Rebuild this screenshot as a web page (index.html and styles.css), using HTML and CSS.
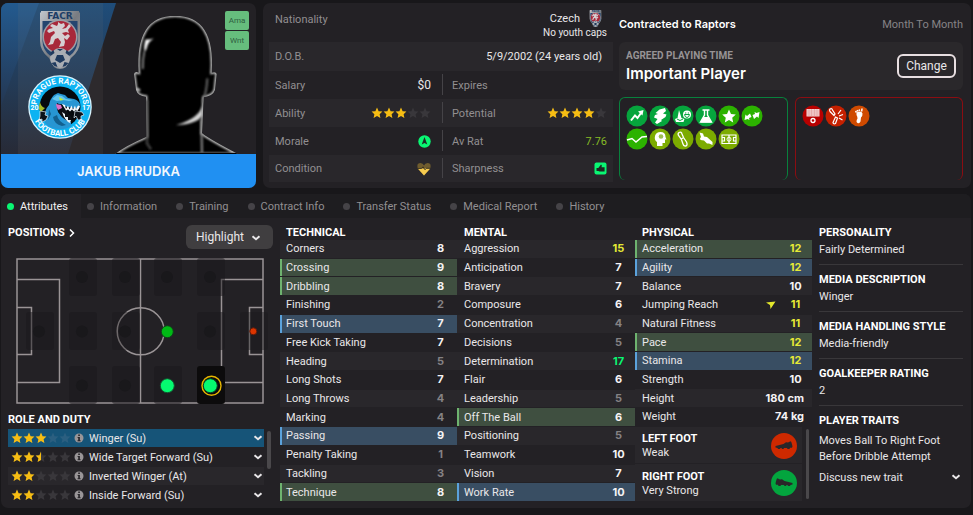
FILE: index.html
```html
<!DOCTYPE html>
<html lang="en">
<head>
<meta charset="utf-8">
<title>Jakub Hrudka</title>
<link rel="stylesheet" href="styles.css">
</head>
<body>
<svg class="defs" aria-hidden="true">
  <defs>
    <path id="star" d="M6 .6 7.6 4.2 11.4 4.6 8.6 7.2 9.4 11 6 9.1 2.6 11 3.4 7.2 .6 4.6 4.4 4.2Z"/>
    <clipPath id="half"><path d="M0 0h6v12H0z"/></clipPath>
    <g id="empty5"><use href="#star"/><use href="#star" x="12"/><use href="#star" x="24"/><use href="#star" x="36"/><use href="#star" x="48"/></g>
    <symbol id="stars2" viewBox="0 0 60 12"><use href="#empty5" class="off"/><use href="#star" class="on"/><use href="#star" x="12" class="on"/></symbol>
    <symbol id="stars25" viewBox="0 0 60 12"><use href="#empty5" class="off"/><use href="#star" class="on"/><use href="#star" x="12" class="on"/><g transform="translate(24)" class="on"><use href="#star" clip-path="url(#half)"/></g></symbol>
    <symbol id="stars3" viewBox="0 0 60 12"><use href="#empty5" class="off"/><use href="#star" class="on"/><use href="#star" x="12" class="on"/><use href="#star" x="24" class="on"/></symbol>
    <symbol id="stars4" viewBox="0 0 60 12"><use href="#empty5" class="off"/><use href="#star" class="on"/><use href="#star" x="12" class="on"/><use href="#star" x="24" class="on"/><use href="#star" x="36" class="on"/></symbol>
    <symbol id="chev" viewBox="0 0 10 10"><path d="M1.5 3.2 5 6.2 8.500 3.200" fill="none" stroke="currentColor" stroke-width="2"/></symbol>
    <symbol id="info" viewBox="0 0 10 10"><circle cx="5" cy="5" r="4.500" fill="#9a9698"/><path d="M4.200 1.600h1.700v1.500H4.200zM3.600 4h2.300v3.200h.7v1H3.500v-1h.7V5h-.6z" fill="#28262a"/></symbol>
    <linearGradient id="steel" x1="0" x2="1" y2="1"><stop offset="0" stop-color="#c3c7cd"/><stop offset=".5" stop-color="#777b81"/><stop offset="1" stop-color="#a4a8ad"/></linearGradient>
    <symbol id="crest" viewBox="0 0 40 58">
      <path d="M1 0h38v1l1 1v28q0 10-9 17l-5 9q-6 4-12 0l-5-9Q0 40 0 30V2l1-1Z" fill="url(#steel)"/>
      <path d="M2.500 10h35v20q0 9-8 15h-19q-8-6-8-15Z" fill="#24456f"/>
      <circle cx="20" cy="26" r="17.500" fill="#9c9fa6"/>
      <circle cx="20" cy="26" r="16" fill="#a8283a"/>
      <path d="M18 11l3 2 3-1 1 3-3 3 4-1 3-4 2 2-3 4 1 3-3-1-4 1 3 3 3-2 2 2-3 4-3-2 1 4-1 4-5 1 2-5-3-4-3 1-2 5-5 1 2-3 1-5 4-4-1-2-5 2-2-2 2-2 4-1-3-2 2-2 5 2 1-2Z" fill="#d5cfd2"/>
      <circle cx="20" cy="47" r="10" fill="#a9adb3"/>
      <path d="M17 44h6l2 5-5 3-5-3ZM10.500 45l4-3-1-3q-4 2-3 6ZM29.500 45l-4-3 1-3q4 2 3 6ZM11.500 52l4-1 2 5q-4-1-6-4ZM28.500 52l-4-1-2 5q4-1 6-4ZM17 38h6l-3 2Z" fill="#1f3a5e"/>
      <text x="20" y="8" text-anchor="middle" class="crest-name">FACR</text>
    </symbol>
  </defs>
</svg>

<section class="top">
  <div class="card player">
    <div class="art">
      <svg class="backdrop" viewBox="0 0 255 151" preserveAspectRatio="none" aria-hidden="true">
        <defs><linearGradient id="sky" x2="0" y2="1"><stop offset="0" stop-color="#1f4d7a"/><stop offset=".5" stop-color="#233c59"/><stop offset="1" stop-color="#272a36"/></linearGradient>
        <linearGradient id="sky2" x2="0" y2="1"><stop offset="0" stop-color="#235a8f"/><stop offset="1" stop-color="#243752"/></linearGradient></defs>
        <path d="M0 0H115L67 151H0Z" fill="url(#sky)"/>
        <path d="M0 0H38L0 103Z" fill="url(#sky2)"/>
        <path d="M17 0h85v151H17z" fill="#8a8078" opacity=".1"/>
      </svg>
      <div class="crests">
        <svg width="40" height="58" role="img" aria-label="Czech Republic"><use href="#crest"/></svg>
        <svg width="64" height="64" viewBox="0 0 64 64" role="img" aria-label="Prague Raptors">
          <defs><path id="arcTop" d="M8.500 32a23.500 23.500 0 0 1 47 0"/><path id="arcBot" d="M3 32a29 29 0 0 0 58 0"/></defs>
          <circle cx="32" cy="32" r="31.800" fill="#d9f3fd"/><circle cx="32" cy="32" r="30.500" fill="#0cb3f2"/>
          <circle cx="32" cy="32" r="20.500" fill="#05090d"/>
          <path d="M12 27q-1 3-1 7l2 3 4-4q-4-1-5-6Z" fill="#a3bb22"/>
          <path d="M17 44q-1-9 4-14 1-6 5-10l4-2 3 1 4 1 3 3 6 1q4 1 6 5l-1 5-5-1-7-1-6-3-4 2 1 6 5 5 5 4 3 1v4q-6 4-14 3-8-1-12-6Z" fill="#2796d3"/>
          <path d="M24 24l5-4 5 1 4 3 7 1-4 1-6-1-6 1Z" fill="#63c6ef"/>
          <path d="M29 40q1 6 9 10l-4 1q-8-2-9-9ZM21 34l2 5-3 6Z" fill="#12608f"/>
          <path d="M29 28l6 3 4 5 5 7-2 4q-8-3-11-9-3-5-2-10Z" fill="#0c0f14"/>
          <path d="M28 29l5 1 1 3-4 2q-2-3-2-6Z" fill="#dd70c8"/>
          <path d="M34 29l3 1 1 4 2-3.500 1.500 4 2-4 1.500 4 2-4 1 3.500 2-3.500 2 .5-1 2.500-2 3-1-2-2 2-2-2-2 2-2-2-2 1Z" fill="#f5fbff"/>
          <path d="M34 37l3 2 0 3 3 0 0 3 3 0-1 3q-5-2-8-11Z" fill="#e9f3f8"/>
          <path d="M31 22l5 3-4 .5Z" fill="#bdec3a"/>
          <path d="M12 36l6 1-1 3 3 1-2 4-4 2 0-3-3 1 1-4ZM47 36l7 1 2 3-3 1 0 4-3 0-2-4-2 2Z" fill="#0b1118" stroke="#dfeef6" stroke-width=".7"/>
          <text class="ring"><textPath href="#arcTop" startOffset="50%" text-anchor="middle">PRAGUE RAPTORS</textPath></text>
          <text class="ring"><textPath href="#arcBot" startOffset="50%" text-anchor="middle">FOOTBALL CLUB</textPath></text>
          <text class="ring year" x="2.500" y="34.500">20</text><text class="ring year" x="54" y="34.500">17</text>
        </svg>
      </div>
      <svg class="head" viewBox="345 42 369 420" aria-hidden="true">
        <defs><filter id="soft" x="-20%" y="-20%" width="140%" height="140%"><feGaussianBlur stdDeviation="2.500"/></filter>
        <path id="bust" d="M345 462q30-24 95-52l-2-120q-25-2-30-20l-6-48q2-9 14-4Q404 47 525 47q122 0 110 171 14-4 15 4l-5 48q-6 18-34 22l-5 108q30 22 108 62Z"/>
        <clipPath id="headClip"><use href="#bust"/></clipPath></defs>
        <use href="#bust" fill="#000"/>
        <g clip-path="url(#headClip)">
          <use href="#bust" fill="none" stroke="#d0d0d0" stroke-width="8" filter="url(#soft)"/>
          <g filter="url(#soft)">
            <path d="M437 118q12 2 24-3-14 10-18 20-3 14-9 22-4-16 3-39Z" fill="#fff"/>
            <path d="M433 155q-5 22-5 52" stroke="#999" stroke-width="5" fill="none"/>
            <path d="M606 318q-8 36-78 58 66-4 79-30Z" fill="#d4d4d4"/>
            <path d="M604 360l2 100" stroke="#8a8a8a" stroke-width="6" fill="none"/>
            <path d="M622 235q-2 40-14 72" stroke="#666" stroke-width="6" fill="none"/>
            <path d="M441 300v130l12 18" stroke="#444" stroke-width="7" fill="none"/>
            <path d="M410 266l10 6" stroke="#eee" stroke-width="6" fill="none"/>
          </g>
          <path d="M345 464H714" stroke="#000" stroke-width="12"/>
        </g>
      </svg>
      <div class="badges"><span>Ama</span><span>Wnt</span></div>
    </div>
    <h1>JAKUB HRUDKA</h1>
  </div>

  <div class="card facts">
    <dl class="details">
      <div class="row nation"><dt>Nationality</dt><dd><span class="country">Czech <svg width="13" height="17"><use href="#crest"/></svg></span><small>No youth caps</small></dd></div>
      <div class="row dob"><dt>D.O.B.</dt><dd>5/9/2002 (24 years old)</dd></div>
      <div class="pair"><div class="row"><dt>Salary</dt><dd class="big">$0</dd></div><div class="row"><dt>Expires</dt><dd></dd></div></div>
      <div class="pair"><div class="row"><dt>Ability</dt><dd><svg class="stars" role="img" aria-label="3 of 5"><use href="#stars3"/></svg></dd></div><div class="row"><dt>Potential</dt><dd><svg class="stars" role="img" aria-label="4 of 5"><use href="#stars4"/></svg></dd></div></div>
      <div class="pair"><div class="row"><dt>Morale</dt><dd><svg width="13" height="13" viewBox="0 0 13 13"><circle cx="6.500" cy="6.500" r="6.200" fill="#09f773"/><path d="M6.500 2 9.300 9.500 6.500 8 3.700 9.500Z" fill="#202a25"/></svg></dd></div><div class="row"><dt>Av Rat</dt><dd class="rating">7.76</dd></div></div>
      <div class="pair"><div class="row"><dt>Condition</dt><dd><svg width="14" height="14" viewBox="0 0 14 14"><path d="M7 13.500 1 7Q-1 1 3.500 1 6 1 7 3.500 8 1 10.500 1 15 1 13 7Z" fill="#6f5c2e"/><path d="M.8 6.500h12.400L7 13.500Z" fill="#f6cb4f"/><path d="M1 6.500h3.500L6 4.800l2 3 1.500-1.500H13" fill="none" stroke="#2a261f" stroke-width=".8"/></svg></dd></div><div class="row"><dt>Sharpness</dt><dd><svg width="13" height="13" viewBox="0 0 13 13"><rect x=".5" y=".5" width="12" height="12" rx="2" fill="#09f773"/><path d="M2.500 6h1.800L7 2.500q1.300.3.600 2.700h3v4.300H5.500L4.300 9H2.500Z" fill="#1d2922"/></svg></dd></div></div>
    </dl>

    <div class="contract">
      <div class="contract-head"><b>Contracted to Raptors</b><span>Month To Month</span></div>
      <div class="agreed">
        <div><h2>AGREED PLAYING TIME</h2><p>Important Player</p></div>
        <button type="button" class="change">Change</button>
      </div>
      <div class="reports">
        <div class="report pros">
          <svg viewBox="0 0 22 22"><circle cx="11" cy="11" r="10.500" fill="#06a53d"/><path d="M5 15.500 9 10.500l2.500 2.500L15 8" fill="none" stroke="#fff" stroke-width="2"/><path d="M12 6.500 17.500 5l-1 5.500Z" fill="#fff"/></svg>
          <svg viewBox="0 0 22 22"><circle cx="11" cy="11" r="10.500" fill="#06a53d"/><path d="M10.500 4.500 16 3l1 3-3 2.500 3.500 1-1 2.500-4.500 3 1 1L8 19l-2-1.500L8.500 14 5 12.500 6 10 9 9 6.500 8Z" fill="#fff"/></svg>
          <svg viewBox="0 0 22 22"><circle cx="11" cy="11" r="10.500" fill="#06a53d"/><path d="M7 5 9.500 13l3 1-1 3H4l-1-3 2.500-1Z" fill="#fff"/><path d="M5 14l3 1.500 3-1.500" fill="none" stroke="#06a53d"/><circle cx="15" cy="9.500" r="4" fill="#fff"/><path d="M12.500 9.500h5q-.5 3-2.500 3t-2.500-3M13 8h1.300M15.800 8H17" stroke="#06a53d" fill="none"/></svg>
          <svg viewBox="0 0 22 22"><circle cx="11" cy="11" r="10.500" fill="#06a53d"/><path d="M7.500 5h7M9.500 5v5L5.500 17h11L12.500 10V5" fill="none" stroke="#fff" stroke-width="1.400"/><path d="M8.500 12h5l3 5.500h-11Z" fill="#fff"/></svg>
          <svg viewBox="0 0 22 22"><circle cx="11" cy="11" r="10.500" fill="#2cb200"/><path d="M11 4.500 13 9l4.800.5-3.600 3.200 1 4.800L11 15l-4.200 2.500 1-4.800L4.200 9.500 9 9Z" fill="#fff"/></svg>
          <svg viewBox="0 0 22 22"><circle cx="11" cy="11" r="10.500" fill="#2cb200"/><path d="M3.500 15 4.500 9.500 6 11l3-2.500L10.500 12 8 13l.5 2-2-1ZM18.500 7 17.500 13 16 11.500 13 14l-1.500-4L14 9l-.5-2 2 1Z" fill="#fff"/></svg>
          <svg viewBox="0 0 22 22"><circle cx="11" cy="11" r="10.500" fill="#2cb200"/><path d="M1 12 6 10.500l4 3.500 6-5 5-.5" fill="none" stroke="#fff" stroke-width="1.500"/></svg>
          <svg viewBox="0 0 22 22"><circle cx="11" cy="11" r="10.500" fill="#7cab00"/><path d="M8 18v-4Q5 12 6 8q1-4 5.500-4 5 0 5 5l1 2.500H16V15h-2.500v3Z" fill="#fff"/><circle cx="12" cy="8.500" r="2.300" fill="#9ebd52"/></svg>
          <svg viewBox="0 0 22 22"><circle cx="11" cy="11" r="10.500" fill="#7cab00"/><path d="M7 4.500q2.500-1 3 1.500l1.500 3.500 3 4.500q1.500 3.500-1 4-2 .3-2.700-2.500L9.500 11.500 6.500 7.500q-1-2 .5-3ZM9 11l3-1.500" fill="none" stroke="#fff" stroke-width="1.300"/></svg>
          <svg viewBox="0 0 22 22"><circle cx="11" cy="11" r="10.500" fill="#7cab00"/><path d="M4.500 4.500 8 5.500l1 3 3 .5 5.500 5v3L14 15.500l-2 0-3-3-3.500-.5L5 10.500l1-1.500Z" fill="#fff"/></svg>
          <svg viewBox="0 0 22 22"><circle cx="11" cy="11" r="10.500" fill="#7cab00"/><path d="M4 7h14v8.500H4ZM11 7v8.500M4 9.500h2.500v3.500H4M18 9.500h-2.500v3.500H18" fill="none" stroke="#fff" stroke-width="1.200"/><circle cx="11" cy="11.200" r="2" fill="none" stroke="#fff"/></svg>
        </div>
        <div class="report cons">
          <svg viewBox="0 0 22 22"><circle cx="11" cy="11" r="10.500" fill="#b80000"/><path d="M4.500 4h13v7.500h-13z" fill="#f3d3d3"/><path d="M4.500 6h13M4.500 8h13M4.500 10h13M7 4v7.500M9.500 4v7.500M12.500 4v7.500M15 4v7.500" stroke="#dd9090" stroke-width=".5"/><circle cx="11" cy="15.500" r="2" fill="none" stroke="#fff" stroke-width="1.300"/></svg>
          <svg viewBox="0 0 22 22"><circle cx="11" cy="11" r="10.500" fill="#c52000"/><path d="M5 4q2-1 2.500 1l2.500 4-1 1.500L5 6.500q-1-1.500 0-2.500ZM10.500 12l2 1-2 5.500q-2 1-2.500-1ZM13 9l3-4M14 11l4-1.500M14 13l3.500 2" fill="none" stroke="#fff" stroke-width="1.200"/></svg>
          <svg viewBox="0 0 22 22"><circle cx="11" cy="11" r="10.500" fill="#cf4a00"/><path d="M8.500 7.500q5-2.500 6 1 .3 2-1.500 4l-.5 4q-1 2.500-3 1.500-2-1 0-4.500 0-2-1-3.500Z" fill="#fff"/><path d="M7.500 6 8.500 7.500M9.300 5l.5 1.500M11.200 4.500l.3 1.500M14 3.500l-.3 3" stroke="#fff" stroke-width="1.500"/></svg>
        </div>
      </div>
    </div>
  </div>
</section>

<main class="card panel">
  <nav class="tabs">
    <a href="#attributes" class="active" aria-current="page">Attributes</a><a href="#information">Information</a><a href="#training">Training</a><a href="#contract">Contract Info</a><a href="#transfer">Transfer Status</a><a href="#medical">Medical Report</a><a href="#history">History</a>
  </nav>
  <div class="columns">
    <section class="positions">
      <div class="pos-head">
        <h2><a href="#positions">POSITIONS <svg width="6" height="10" viewBox="0 0 6 10"><path d="M1 1.500 4.500 5 1 8.500" fill="none" stroke="currentColor" stroke-width="1.500"/></svg></a></h2>
        <div class="select"><select aria-label="Highlight"><option>Highlight</option></select><svg width="10" height="10"><use href="#chev"/></svg></div>
      </div>
      <svg class="pitch" viewBox="0 0 248 146" role="img" aria-label="Playing positions">
        <g fill="none" stroke="#9a9496" stroke-width="1.500">
          <path d="M1 1h246v144H1zM124.500 1v144M1 21.500h42.500v103H1M1 49.500h14.500v47H1M247 21.500h-41.500v103H247M247 49.500h-13.500v47H247"/>
          <circle cx="124.700" cy="73.300" r="23.500"/>
        </g>
        <g fill="#19181b" fill-opacity=".5">
          <rect x="53" y="0" width="28" height="38" rx="3"/><rect x="96" y="0" width="28" height="38" rx="3"/><rect x="138" y="0" width="28" height="38" rx="3"/><rect x="181" y="0" width="28" height="38" rx="3"/>
          <rect x="10" y="54" width="28" height="38" rx="3"/><rect x="53" y="54" width="28" height="38" rx="3"/><rect x="96" y="54" width="28" height="38" rx="3" fill-opacity=".35"/><rect x="181" y="54" width="28" height="38" rx="3"/><rect x="224" y="54" width="28" height="38" rx="3" fill-opacity=".4"/>
          <rect x="53" y="108" width="28" height="38" rx="3"/><rect x="96" y="108" width="28" height="38" rx="3" /><rect x="138" y="108" width="28" height="38" rx="3"/>
        </g>
        <rect x="181" y="108" width="28" height="38" rx="3" fill="#0c0b0c"/>
        <g fill="#19181b"><circle cx="66" cy="19" r="6"/><circle cx="109" cy="19" r="6"/><circle cx="151" cy="19" r="6"/><circle cx="194" cy="19" r="6"/><circle cx="23" cy="73.500" r="6"/><circle cx="66" cy="73.500" r="6"/><circle cx="109" cy="73.500" r="6"/><circle cx="194" cy="73.500" r="6"/><circle cx="66" cy="127.500" r="6"/><circle cx="109" cy="127.500" r="6"/></g>
        <circle cx="151.300" cy="73.700" r="6" fill="#00b915" stroke="#123f1c"/>
        <circle cx="151.300" cy="127.700" r="7" fill="#05fa70" stroke="#14532f"/>
        <circle cx="194.300" cy="127.700" r="7" fill="#05fa70" stroke="#0a3d20"/>
        <circle cx="195.500" cy="127.700" r="9.500" fill="none" stroke="#e5b400" stroke-width="1.400"/>
        <circle cx="237.300" cy="73.300" r="3.500" fill="#dc3500" stroke="#5c1b0c"/>
      </svg>
      <h2>ROLE AND DUTY</h2>
      <div class="role-box">
        <div class="roles">
          <button type="button" class="current"><svg class="stars"><use href="#stars3"/></svg><svg class="info"><use href="#info"/></svg><span>Winger (Su)</span><svg class="chev"><use href="#chev"/></svg></button>
          <button type="button"><svg class="stars"><use href="#stars25"/></svg><svg class="info"><use href="#info"/></svg><span>Wide Target Forward (Su)</span><svg class="chev"><use href="#chev"/></svg></button>
          <button type="button"><svg class="stars"><use href="#stars2"/></svg><svg class="info"><use href="#info"/></svg><span>Inverted Winger (At)</span><svg class="chev"><use href="#chev"/></svg></button>
          <button type="button"><svg class="stars"><use href="#stars2"/></svg><svg class="info"><use href="#info"/></svg><span>Inside Forward (Su)</span><svg class="chev"><use href="#chev"/></svg></button>
        </div>
        <i class="bar role-bar"></i>
      </div>
    </section>

    <section class="attrs">
      <h2>TECHNICAL</h2>
      <table><tbody>
        <tr><th scope="row">Corners</th><td>8</td></tr>
        <tr class="key"><th scope="row">Crossing</th><td>9</td></tr>
        <tr class="key"><th scope="row">Dribbling</th><td>8</td></tr>
        <tr><th scope="row">Finishing</th><td class="low">2</td></tr>
        <tr class="pref"><th scope="row">First Touch</th><td>7</td></tr>
        <tr><th scope="row">Free Kick Taking</th><td>7</td></tr>
        <tr><th scope="row">Heading</th><td class="low">5</td></tr>
        <tr><th scope="row">Long Shots</th><td>7</td></tr>
        <tr><th scope="row">Long Throws</th><td class="low">4</td></tr>
        <tr><th scope="row">Marking</th><td class="low">4</td></tr>
        <tr class="pref"><th scope="row">Passing</th><td>9</td></tr>
        <tr><th scope="row">Penalty Taking</th><td class="low">1</td></tr>
        <tr><th scope="row">Tackling</th><td class="low">3</td></tr>
        <tr class="key"><th scope="row">Technique</th><td>8</td></tr>
      </tbody></table>
    </section>

    <section class="attrs mental">
      <h2>MENTAL</h2>
      <table><tbody>
        <tr><th scope="row">Aggression</th><td class="good">15</td></tr>
        <tr><th scope="row">Anticipation</th><td>7</td></tr>
        <tr><th scope="row">Bravery</th><td>7</td></tr>
        <tr><th scope="row">Composure</th><td>6</td></tr>
        <tr><th scope="row">Concentration</th><td class="low">4</td></tr>
        <tr><th scope="row">Decisions</th><td class="low">5</td></tr>
        <tr><th scope="row">Determination</th><td class="top-value">17</td></tr>
        <tr><th scope="row">Flair</th><td>6</td></tr>
        <tr><th scope="row">Leadership</th><td class="low">5</td></tr>
        <tr class="key"><th scope="row">Off The Ball</th><td>6</td></tr>
        <tr><th scope="row">Positioning</th><td class="low">5</td></tr>
        <tr><th scope="row">Teamwork</th><td>10</td></tr>
        <tr><th scope="row">Vision</th><td>7</td></tr>
        <tr class="pref"><th scope="row">Work Rate</th><td>10</td></tr>
      </tbody></table>
    </section>

    <section class="attrs physical">
      <h2>PHYSICAL</h2>
      <table><tbody>
        <tr class="key"><th scope="row">Acceleration</th><td class="good">12</td></tr>
        <tr class="pref"><th scope="row">Agility</th><td class="good">12</td></tr>
        <tr><th scope="row">Balance</th><td>10</td></tr>
        <tr><th scope="row">Jumping Reach <svg width="10" height="8" viewBox="0 0 10 8"><path d="M0 1.500 9.500.5 4.500 8 4 4Z" fill="#e4e82c"/></svg></th><td class="good">11</td></tr>
        <tr><th scope="row">Natural Fitness</th><td class="good">11</td></tr>
        <tr class="key"><th scope="row">Pace</th><td class="good">12</td></tr>
        <tr class="pref"><th scope="row">Stamina</th><td class="good">12</td></tr>
        <tr><th scope="row">Strength</th><td>10</td></tr>
        <tr><th scope="row">Height</th><td class="unit">180 cm</td></tr>
        <tr><th scope="row">Weight</th><td class="unit">74 kg</td></tr>
      </tbody></table>
      <div class="feet">
        <div class="foot-list">
          <div class="foot"><div><h3>LEFT FOOT</h3><p>Weak</p></div><svg viewBox="0 0 28 28"><circle cx="14" cy="14" r="13" fill="#ce2900"/><path id="boot" d="M5.500 14q4-1.200 8-2l2.500-1.800 2 .3 2.500-1.200q1 .5 1.200 2l.8 3-.5 1.500H20l-.5 1.200h-2L17 16h-3l-.5 1h-1.500l-.5-1h-1l-.5 1H8L7.500 16 5.500 15.500Z" fill="#2a2729"/></svg></div>
          <div class="foot"><div><h3>RIGHT FOOT</h3><p>Very Strong</p></div><svg viewBox="0 0 28 28"><circle cx="14" cy="14" r="13" fill="#03a53e"/><use href="#boot" transform="matrix(-1 0 0 1 28 0)"/></svg></div>
        </div>
        <i class="bar foot-bar"></i>
      </div>
    </section>

    <section class="bio">
      <div><h2>PERSONALITY</h2><p>Fairly Determined</p></div>
      <div><h2>MEDIA DESCRIPTION</h2><p>Winger</p></div>
      <div><h2>MEDIA HANDLING STYLE</h2><p>Media-friendly</p></div>
      <div><h2>GOALKEEPER RATING</h2><p>2</p></div>
      <div><h2>PLAYER TRAITS</h2><p class="trait">Moves Ball To Right Foot Before Dribble Attempt</p>
      <button type="button" class="discuss">Discuss new trait <svg class="chev"><use href="#chev"/></svg></button></div>
    </section>
  </div>
</main>
</body>
</html>
```
FILE: styles.css
```css
* { box-sizing: border-box; }
body {
  margin: 0;
  min-height: 100vh;
  padding: 3px 2px 7px 1px;
  display: flex;
  flex-direction: column;
  gap: 6px;
  background: #18171a;
  color: #e9e7e9;
  font: 11px/17px Roboto, "Liberation Sans", sans-serif;
}
h1, h2, h3, p, dl, dd { margin: 0; }
svg { display: block; flex: none; }
button, select { font: inherit; color: inherit; border: 0; background: none; padding: 0; }
a { color: inherit; text-decoration: none; }
h2, h3 { font: bold 11px/15px Roboto, "Liberation Sans", sans-serif; color: #fff; }
.defs { position: absolute; width: 0; height: 0; }
.on { fill: #f6bd13; }
.off { fill: var(--empty, #39373b); }
.stars { width: 60px; height: 12px; }
.chev { width: 10px; height: 10px; }
.info { width: 10px; height: 10px; }
.card { background: #232125; border-radius: 7px; overflow: hidden; }

.top { display: grid; grid-template-columns: 255fr 708fr; gap: 7px; }
.player { display: flex; flex-direction: column; }
.art { flex: 1; position: relative; display: flex; align-items: flex-end; gap: 13px; padding-left: 16px; }
.backdrop { position: absolute; inset: 0; width: 100%; height: 100%; }
.crests { position: relative; width: 85px; align-self: stretch; display: flex; flex-direction: column; align-items: center; gap: 6px; padding-top: 8px; }
.crest-name { font: bold 9px "DejaVu Sans", sans-serif; fill: #1d3d66; }
.ring { font: bold 8px Roboto, sans-serif; fill: #fff; }
.ring.year { font-size: 7px; }
.head { position: relative; width: 123px; height: 140px; }
.badges { position: absolute; top: 8px; right: 7px; display: grid; gap: 1px; }
.badges span { width: 24px; height: 19px; border-radius: 2px; background: #66bd7d; color: #2f6040; font-size: 8px; line-height: 20px; text-align: center; }
.player h1 { height: 34px; background: #2090f2; color: #f2f7fc; font: 600 13px/34px Inter, "Liberation Sans", sans-serif; text-align: center; }

.facts { display: grid; grid-template-columns: 1fr 1fr; gap: 6px; padding: 0 8px 0 6px; }
.details { padding-bottom: 6px; }
.row { display: flex; justify-content: space-between; align-items: center; height: 28px; padding: 0 6px; }
.row dt { color: #928f91; }
.nation { height: 39px; align-items: flex-start; padding-top: 8px; }
.nation dd { text-align: right; line-height: 13px; }
.country { display: flex; justify-content: flex-end; align-items: center; gap: 9px; height: 15px; padding-right: 5px; }
.nation small { font-size: 10px; }
.dob { height: 29px; background: #29272b; padding-right: 11px; }
.big { font-size: 12px; }
.rating { color: #86bb25; }
.pair { display: grid; grid-template-columns: 1fr 1fr; }
.pair:nth-child(even) { background: #29272b; }
.pair .row { position: relative; padding-right: 10px; }
.pair .row + .row { padding: 0 6px 0 11px; }
.pair .row + .row::before { content: ""; position: absolute; left: 1px; top: 3px; bottom: 4px; width: 1px; background: #454347; }
.pair:last-child .row { height: 27px; }

.contract { display: flex; flex-direction: column; padding-bottom: 8px; }
.contract-head { display: flex; justify-content: space-between; align-items: center; height: 39px; padding-top: 3px; }
.contract-head b { color: #fff; font-family: Inter, sans-serif; font-weight: 600; }
.contract-head span { color: #868385; }
.agreed { display: flex; justify-content: space-between; align-items: center; height: 48px; border-radius: 6px; background: #2a282b; padding: 0 7px; }
.agreed h2 { font-size: 10px; line-height: 16px; color: #979395; }
.agreed p { font: 600 15px/20px Inter, sans-serif; color: #fff; }
.change { width: 59px; height: 24px; border: 2px solid #e8dfe1; border-radius: 6px; font-size: 12px; }
.reports { flex: 1; display: grid; grid-template-columns: 1fr 1fr; gap: 7px; margin-top: 7px; }
.report { display: flex; flex-wrap: wrap; align-content: flex-start; gap: 1px; border: 1px solid; border-bottom: 0; border-radius: 6px; padding: 7px 19px 0 6px; }
.report svg { width: 22px; height: 22px; }
.pros { border-color: #08813d; }
.cons { border-color: #8b0d12; }

.panel { flex: 1; display: flex; flex-direction: column; }
.tabs { display: flex; height: 24px; background: #1e1d20; }
.tabs a { display: flex; align-items: center; gap: 6px; padding: 0 13px 0 6px; color: #928f91; }
.tabs a::before { content: ""; width: 7px; height: 7px; border-radius: 50%; background: #454347; }
.tabs .active { background: #232125; color: #f2f0f2; }
.tabs .active::before { background: #09f773; }

.columns { flex: 1; display: grid; grid-template-columns: 279fr 177fr 178fr 177fr 159fr; padding: 7px 0 4px; }
.positions { padding: 0 9px 0 7px; display: flex; flex-direction: column; }
.pos-head { display: flex; justify-content: space-between; align-items: flex-start; margin-right: -2px; }
.pos-head a { display: flex; align-items: center; gap: 4px; }
.select { position: relative; }
.select select { appearance: none; width: 87px; height: 24px; padding: 0 10px; border-radius: 6px; background: #403e40; font-size: 12px; }
.select svg { position: absolute; right: 12px; top: 8px; pointer-events: none; }
.pitch { margin: 9px 7px 8px 8px; overflow: visible; }
.role-box { display: flex; gap: 3px; margin-top: 2px; }
.roles { flex: 1; display: grid; gap: 1px; }
.roles button { display: flex; align-items: center; height: 18px; padding: 0 1px 0 3px; text-align: left; }
.roles .info { margin: 0 5px 0 3px; }
.roles span { flex: 1; }
.roles button:nth-child(odd) { background: #29272b; }
.roles button.current { background: #165478; }
.current .stars { --empty: #2b5f80; }
.bar { border-radius: 2px; background: #4a484b; }
.role-bar { width: 4px; height: 38px; margin-top: 2px; }

.attrs { display: flex; flex-direction: column; padding-bottom: 3px; }
.attrs h2 { padding-left: 6px; }
.attrs table { flex: 14; display: flex; flex-direction: column; }
.attrs tbody { flex: 1; display: grid; grid-auto-rows: 1fr; gap: 1px; }
.attrs tr { display: flex; align-items: center; border-left: 2px solid transparent; }
.attrs tr:nth-child(odd) { background: #29272b; }
.attrs tr.key { background: #3f4f40; border-color: #6eb36f; }
.attrs tr.pref { background: #394e63; border-color: #5ba2dc; }
.attrs th { flex: 1; display: flex; justify-content: space-between; align-items: center; padding: 0 0 0 4px; font-weight: 400; text-align: left; }
.mental h2, .physical h2 { padding-left: 7px; }
.mental th, .physical th { padding-left: 5px; }
.attrs th svg { margin-right: 3px; }
.attrs td { width: 33px; padding: 0; font-family: Inter, sans-serif; font-weight: 700; text-align: center; color: #f5f3f5; }
.attrs .low { color: #858284; }
.attrs .good { color: #e5ea35; }
.attrs .top-value { color: #09f773; }
.attrs .unit { width: auto; padding-right: 8px; }
.physical table { flex: 10 1 0; }
.feet { flex: 4 1 0; display: flex; gap: 4px; margin-top: 1px; padding-right: 3px; }
.foot-list { flex: 1; display: grid; grid-auto-rows: 1fr; gap: 1px; }
.foot { display: flex; justify-content: space-between; align-items: center; background: #29272b; padding: 1px 4px 0 7px; }
.foot p { line-height: 14px; }
.foot svg { width: 28px; height: 28px; }
.foot-bar { width: 3px; margin: 2px 0; }

.bio { padding: 0 8px 0 7px; }
.bio > div { height: 47px; }
.bio > div:not(:last-child)::after { content: ""; display: block; height: 1px; margin-top: 6px; background: #39373a; }
.bio p { margin-top: 1px; }
.bio .trait { margin-top: 5px; line-height: 16px; }
.discuss { display: flex; justify-content: space-between; align-items: center; width: 100%; height: 24px; padding-right: 2px; }
```
